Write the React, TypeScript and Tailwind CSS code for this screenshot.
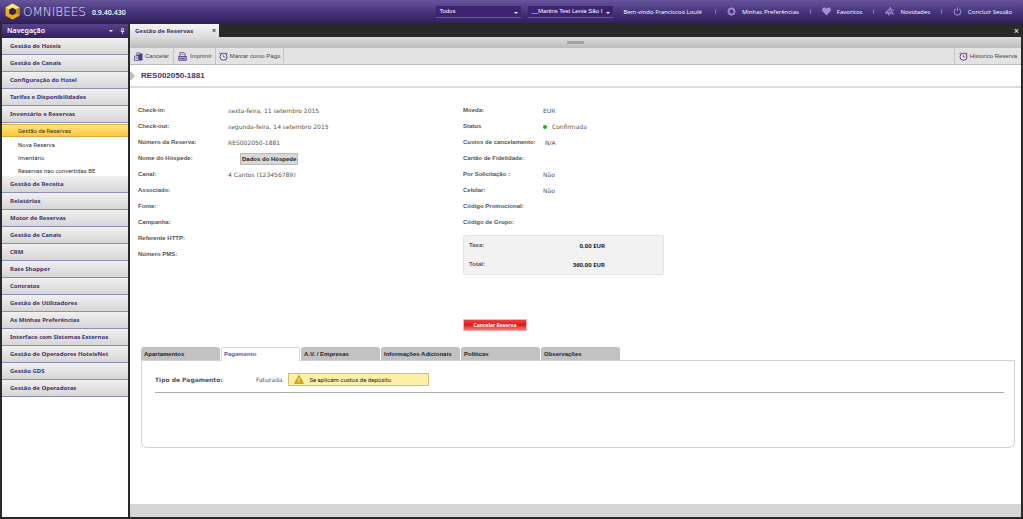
import { useState, type ReactNode } from "react";

const NAV_TOP = ["Gestão de Hoteis", "Gestão de Canais", "Configuração do Hotel", "Tarifas e Disponibilidades", "Inventário e Reservas"];
const NAV_SUB = ["Gestão de Reservas", "Nova Reserva", "Inventário", "Reservas nao convertidas BE"];
const NAV_BOTTOM = [
  "Gestão de Receita",
  "Relatórios",
  "Motor de Reservas",
  "Gestão de Canais",
  "CRM",
  "Rate Shopper",
  "Contratos",
  "Gestão de Utilizadores",
  "As Minhas Preferências",
  "Interface com Sistemas Externos",
  "Gestão de Operadores HoteisNet",
  "Gestão GDS",
  "Gestão de Operadoras",
];
const TABS = ["Apartamentos", "Pagamento", "A.V. / Empresas", "Informações Adicionais", "Políticas", "Observações"];

function Logo() {
  return (
    <svg viewBox="0 0 16 18" className="h-[17px] w-[15px] shrink-0" aria-hidden="true">
      <path d="M8 .5 15.400 4.700v8.600L8 17.500.6 13.300V4.700Z" fill="#e9b90c" />
      <path d="M8 .5 15.400 4.700 11.600 6.900 8 4.900 4.400 6.900.6 4.700Z" fill="#fbe86a" />
      <path d="M15.400 4.700v8.600l-3.800-2.200V6.900Z" fill="#c98a06" />
      <path d="M.6 13.300 4.400 11.100 8 13.100l3.600-2 3.800 2.200L8 17.500Z" fill="#f0a80a" />
      <path d="M8 4.900 11.600 6.900v4.200L8 13.100l-3.600-2V6.900Z" fill="#33215f" />
    </svg>
  );
}

function GearIcon() {
  return (
    <svg viewBox="0 0 16 16" className="size-[9px] shrink-0" fill="none" stroke="#9a86c8" aria-hidden="true">
      <circle cx="8" cy="8" r="5" strokeWidth="3" />
      <path d="M8 .5v2M8 13.500v2M.5 8h2M13.500 8h2M2.700 2.700l1.500 1.500M11.800 11.800l1.500 1.500M13.300 2.700l-1.500 1.500M4.200 11.800l-1.500 1.500" strokeWidth="2.800" />
    </svg>
  );
}

function HeartIcon() {
  return (
    <svg viewBox="0 0 16 16" className="size-[9px] shrink-0" fill="#a491d0" aria-hidden="true">
      <path d="M8 15 1.300 8C-.5 6-.2 3 1.800 1.700 4 .3 6.700 1 8 3.400 9.300 1 12 .3 14.200 1.700c2 1.300 2.300 4.300.5 6.300Z" />
    </svg>
  );
}

function MegaphoneIcon() {
  return (
    <svg viewBox="0 0 16 16" className="size-[9px] shrink-0" aria-hidden="true">
      <path d="M9.500.8 14 12.300C11 10.800 8.500 10.700 5.800 11.400L4.200 7C6.800 5.600 8.600 3.700 9.500.8Z" fill="#6d5aa6" stroke="#9a86c8" strokeWidth="2" />
      <path d="M3.300 7.300 5 11.800l-2 .7C.4 13-.8 9.200 1.400 8Z" fill="#9a86c8" />
      <path d="m4.800 12 2.500-.8L8.800 15H6Z" fill="#9a86c8" />
      <path d="M13.200 4.200c1.800.3 2.400 2 1.600 3.500" fill="none" stroke="#9a86c8" strokeWidth="1.400" />
    </svg>
  );
}

function PowerIcon() {
  return (
    <svg viewBox="0 0 16 16" className="size-[9px] shrink-0" fill="none" stroke="#9a86c8" strokeWidth="2" aria-hidden="true">
      <path d="M8 .5v6.500M4.800 3.300a6 6 0 1 0 6.400 0" />
    </svg>
  );
}

function CancelIcon() {
  return (
    <svg viewBox="0 0 18 18" className="size-[9px] shrink-0" aria-hidden="true">
      <path d="M5 1h7v2h5v14H9V9H5Z" fill="#4c3d82" />
      <path d="M6 2h5v3H6Z" fill="#cbc5de" />
      <path d="M1 8h8v9H1Z" fill="#f1eff7" stroke="#4c3d82" strokeWidth="1.400" />
      <path d="m3 10.500 4 4m0-4-4 4" stroke="#4c3d82" strokeWidth="1.600" />
    </svg>
  );
}

function PrintIcon() {
  return (
    <svg viewBox="0 0 18 18" className="size-[9px] shrink-0" fill="none" stroke="#4c3d82" strokeWidth="1.800" aria-hidden="true">
      <path d="M4 9V1.500h8L14 4v5" fill="#fff" />
      <path d="M6.500 5.500h5" strokeWidth="1.500" />
      <path d="M1.500 9h15v7.500h-15Z" fill="#b9b2d2" />
      <path d="M4.500 13h9" />
    </svg>
  );
}

function ClockIcon() {
  return (
    <svg viewBox="0 0 18 18" className="size-[9px] shrink-0" fill="none" stroke="#4c3d82" aria-hidden="true">
      <circle cx="9" cy="9.500" r="7" strokeWidth="2" fill="#f4f2f9" />
      <path d="M8.500 5.500V10H13" strokeWidth="1.600" />
      <path d="M.8 4.300 4 1M17.200 4.300 14 1" strokeWidth="1.800" />
    </svg>
  );
}

function WarningIcon() {
  return (
    <svg viewBox="0 0 20 18" className="h-[9px] w-[10px] shrink-0" aria-hidden="true">
      <path d="M10 1 19 17H1Z" fill="#e0a613" stroke="#c98f0c" strokeWidth="1.500" strokeLinejoin="round" />
      <path d="M10 6v5.500M10 13v2" stroke="#fff6c4" strokeWidth="2" />
    </svg>
  );
}

function HeaderSelect({ label, value }: { label: string; value: string }) {
  return (
    <div className="relative w-[85px]">
      <select
        aria-label={label}
        defaultValue={value}
        className="block h-[12px] w-full appearance-none border-b border-[#6a579f] bg-[#3c2472] pr-[9px] pl-[3px] text-[6px] leading-[11px] text-white"
      >
        <option>{value}</option>
      </select>
      <svg viewBox="0 0 4 2" className="pointer-events-none absolute top-[6px] right-[3px] h-[2px] w-[4px]" aria-hidden="true">
        <path d="M0 0h4L2 2Z" fill="#fff" />
      </svg>
    </div>
  );
}

function HeaderLink({ icon, children }: { icon: ReactNode; children: ReactNode }) {
  return (
    <a href="#" className="flex items-center gap-[6px] whitespace-nowrap">
      {icon}
      {children}
    </a>
  );
}

function Separator() {
  return <span className="h-[5px] w-px bg-[#8472b0]" aria-hidden="true" />;
}

function NavItem({ children }: { children: ReactNode }) {
  return (
    <a
      href="#"
      className="block h-[17px] border-b border-[#8f8bb5] bg-linear-to-b from-[#f0f0f0] to-[#d6d6d6] pl-[8px] font-['Noto_Sans',sans-serif] text-[6px] leading-[16px] font-bold whitespace-nowrap text-[#40346f]"
    >
      {children}
    </a>
  );
}

function Row({ label, wide = false, children }: { label: string; wide?: boolean; children?: ReactNode }) {
  return (
    <div className="flex h-[16px] items-center">
      <dt className={wide ? "w-[90px] shrink-0 font-bold whitespace-nowrap text-[#555]" : "w-[80px] shrink-0 font-bold whitespace-nowrap text-[#555]"}>
        {label}
      </dt>
      <dd className="pt-[2px] font-['DejaVu_Sans',sans-serif] whitespace-nowrap text-[#555]">{children}</dd>
    </div>
  );
}

function TotalRow({ label, value }: { label: string; value: string }) {
  return (
    <div className="flex h-[19px] items-center">
      <dt className="w-[60px] pb-[2px] font-bold text-[#555]">{label}</dt>
      <dd className="w-[76px] text-right font-['Open_Sans',sans-serif] font-bold text-[#222]">{value}</dd>
    </div>
  );
}

export default function App() {
  const [tab, setTab] = useState("Pagamento");

  return (
    <div className="flex min-h-screen flex-col bg-[#292929] font-['Liberation_Sans',Arial,sans-serif] text-[6px] leading-[8px]">
      <header className="flex h-[23px] items-center bg-linear-to-b from-[#66559a] via-[#48347f] to-[#302257] pr-[11px] pl-[5px] font-['Open_Sans',sans-serif] text-white">
        <Logo />
        <span className="ml-[3px] font-['DejaVu_Sans',sans-serif] text-[12px] leading-[14px] font-extralight text-[#e6e2f2]">OMNIBEES</span>
        <span className="mt-[3px] ml-[6px] text-[7px] font-semibold">0.9.40.430</span>
        <div className="ml-auto flex items-center gap-[7px] font-['Liberation_Sans',Arial,sans-serif]">
          <HeaderSelect label="Grupo" value="Todos" />
          <HeaderSelect label="Hotel" value="__Martins Test Lenia São I" />
        </div>
        <span className="ml-[10px] whitespace-nowrap">Bem-vindo Franciscoo Loulé</span>
        <nav aria-label="Conta" className="ml-[13px] flex items-center gap-[11px]">
          <Separator />
          <HeaderLink icon={<GearIcon />}>Minhas Preferências</HeaderLink>
          <Separator />
          <HeaderLink icon={<HeartIcon />}>Favoritos</HeaderLink>
          <Separator />
          <HeaderLink icon={<MegaphoneIcon />}>Novidades</HeaderLink>
          <Separator />
          <HeaderLink icon={<PowerIcon />}>Concluir Sessão</HeaderLink>
        </nav>
      </header>

      <div className="flex flex-1 gap-[2px] px-[2px] pt-px pb-[2px]">
        <aside className="w-[126px] shrink-0 bg-white">
          <h2 className="flex h-[14px] items-center bg-linear-to-b from-[#55448c] to-[#32215f] pr-[3px] pl-[5px] font-['Noto_Sans',sans-serif] text-[7px] font-semibold text-white">
            Navegação
            <svg viewBox="0 0 4 2" className="ml-auto h-[2px] w-[4px]" aria-hidden="true">
              <path d="M0 0h4L2 2Z" fill="#fff" />
            </svg>
            <svg viewBox="0 0 5 7" className="ml-[7px] h-[6px] w-[5px]" fill="none" stroke="#fff" strokeWidth="0.800" aria-hidden="true">
              <path d="M1.500.5h2v3.500h-2ZM.5 4h4M2.500 4v3" />
            </svg>
          </h2>
          <nav aria-label="Navegação">
            {NAV_TOP.map((item) => (
              <NavItem key={item}>{item}</NavItem>
            ))}
            <ul className="pt-px font-['Roboto',sans-serif] text-[#333]">
              {NAV_SUB.map((item, i) => (
                <li key={item}>
                  <a
                    href="#"
                    className={
                      i === 0
                        ? "block h-[13px] border-y border-[#d9ab3a] bg-linear-to-b from-[#ffe57c] to-[#ffc933] pl-[16px] leading-[12px]"
                        : "block h-[13px] pl-[16px] leading-[15px]"
                    }
                  >
                    {item}
                  </a>
                </li>
              ))}
            </ul>
            {NAV_BOTTOM.map((item) => (
              <NavItem key={item}>{item}</NavItem>
            ))}
          </nav>
        </aside>

        <main className="flex min-w-0 flex-1 flex-col">
          <div className="flex h-[13px] items-center">
            <div className="flex h-full w-[89px] items-center justify-between bg-linear-to-b from-[#f4f4f4] to-[#dcdcdc] pr-[3px] pl-[5px] font-['Noto_Sans',sans-serif] font-bold whitespace-nowrap text-[#40346f]">
              Gestão de Reservas
              <button aria-label="Fechar separador" className="text-[7px] text-[#333]">×</button>
            </div>
            <button aria-label="Fechar" className="ml-auto pr-[2px] text-[9px] text-white">×</button>
          </div>

          <div className="flex h-[11px] items-center justify-center bg-linear-to-b from-[#dcdcdc] to-[#bdbdbd]">
            <span className="h-[3px] w-[17px] bg-[#a3a3a3]" />
          </div>

          <div className="flex h-[17px] items-stretch border-b border-[#bbb] bg-[#e3e3e3] text-[#444]">
            <button className="flex items-center gap-[2px] border-r border-[#c4c4c4] px-[4px]">
              <CancelIcon />
              Cancelar
            </button>
            <button className="flex items-center gap-[3px] border-r border-[#c4c4c4] pr-[3px] pl-[4px]">
              <PrintIcon />
              Imprimir
            </button>
            <button className="flex items-center gap-[2px] border-r border-[#c4c4c4] px-[3px]">
              <ClockIcon />
              Marcar como Pago
            </button>
            <button className="ml-auto flex items-center gap-[2px] border-l border-[#c4c4c4] px-[4px]">
              <ClockIcon />
              Historico Reserva
            </button>
          </div>

          <div className="flex flex-1 flex-col bg-white">
            <div className="flex h-[23px] items-center gap-[6px] border-b-2 border-[#dcdcdc]">
              <svg viewBox="0 0 5 8" className="h-[8px] w-[5px]" aria-hidden="true">
                <path d="M0 0h1.500L5 4 1.500 8H0Z" fill="#bdbdc4" />
              </svg>
              <h1 className="text-[8px] font-bold text-[#3d3273]">RES002050-1881</h1>
            </div>

            <div className="flex px-[8px] pt-[14px]">
              <dl className="w-[325px] shrink-0">
                <Row wide label="Check-in:">sexta-feira, 11 setembro 2015</Row>
                <Row wide label="Check-out:">segunda-feira, 14 setembro 2015</Row>
                <Row wide label="Número da Reserva:">RES002050-1881</Row>
                <Row wide label="Nome do Hóspede:">
                  <button className="ml-[12px] block h-[12px] border border-[#bbb] bg-[#d8d8d8] px-[1px] font-['Liberation_Sans',Arial,sans-serif] font-bold text-[#222]">
                    Dados do Hóspede
                  </button>
                </Row>
                <Row wide label="Canal:">4 Cantos (123456789)</Row>
                <Row wide label="Associado:" />
                <Row wide label="Fonte:" />
                <Row wide label="Campanha:" />
                <Row wide label="Referente HTTP:" />
                <Row wide label="Número PMS:" />
              </dl>
              <div>
                <dl>
                  <Row label="Moeda:">EUR</Row>
                  <Row label="Status">
                    <span className="flex items-center gap-[5px]">
                      <span className="size-[4px] rounded-full bg-[#13b313]" />
                      Confirmada
                    </span>
                  </Row>
                  <Row label="Custos de cancelamento:">
                    <span className="pl-[2px]">N/A</span>
                  </Row>
                  <Row label="Cartão de Fidelidade:" />
                  <Row label="Por Solicitação :">Não</Row>
                  <Row label="Celular:">Não</Row>
                  <Row label="Código Promocional:" />
                  <Row label="Código de Grupo:" />
                </dl>
                <dl className="mt-[5px] w-[201px] rounded-[2px] border border-[#e2e2e2] bg-[#f2f2f2] pl-[5px]">
                  <TotalRow label="Taxa:" value="0,00 EUR" />
                  <TotalRow label="Total:" value="360,00 EUR" />
                </dl>
                <button className="mt-[44px] block h-[12px] w-[64px] border border-[#f6b0b0] bg-linear-to-b from-[#f04040] via-[#e01414] to-[#ff7070] font-['Noto_Sans',sans-serif] text-[5px] font-bold text-white">
                  Cancelar Reserva
                </button>
              </div>
            </div>

            <section className="mt-[16px] mr-[6px] ml-[11px]">
              <div role="tablist" className="flex gap-px">
                {TABS.map((name) => (
                  <button
                    key={name}
                    role="tab"
                    aria-selected={tab === name}
                    onClick={() => setTab(name)}
                    className={
                      tab === name
                        ? "relative z-10 -mb-px h-[14px] w-[79px] rounded-t-[2px] border border-b-0 border-[#d8d8de] bg-white pb-[2px] pl-[2px] text-left font-bold whitespace-nowrap text-[#6257ae]"
                        : "h-[13px] w-[79px] rounded-t-[3px] bg-[#c2c2c2] pl-[3px] text-left font-bold whitespace-nowrap text-[#222]"
                    }
                  >
                    {name}
                  </button>
                ))}
              </div>
              <div role="tabpanel" className="min-h-[88px] rounded-b-[6px] border border-[#d0d0d6] pt-[12px] pr-[10px] pl-[13px]">
                <div className="flex items-center border-b border-[#aaa] pb-[6px] font-['DejaVu_Sans',sans-serif] text-[#555]">
                  <span className="w-[101px] font-bold">Tipo de Pagamento:</span>
                  <span>Faturada</span>
                  <p className="ml-[6px] flex h-[13px] w-[141px] items-center gap-[5px] border border-[#d8c35a] bg-[#fbf0a4] pl-[5px] font-['Roboto',sans-serif] text-[#222]">
                    <WarningIcon />
                    Se aplicam custos de depósito
                  </p>
                </div>
              </div>
            </section>

            <footer className="mt-auto h-[13px] bg-[#d6d6d6]" />
          </div>
        </main>
      </div>
    </div>
  );
}
